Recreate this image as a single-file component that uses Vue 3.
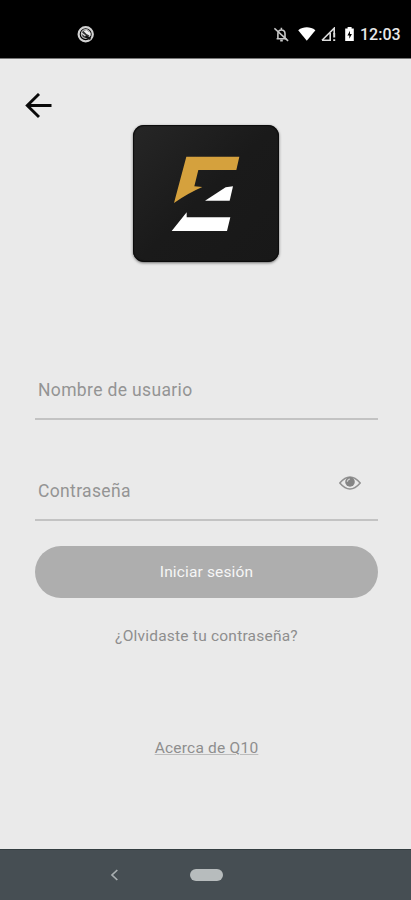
<script setup>
import { ref } from 'vue'

const username = ref('')
const password = ref('')
const passwordVisible = ref(false)
</script>

<template>
  <div class="screen">
    <header class="status">
      <svg class="app-mark" width="18" height="18" viewBox="0 0 18 18">
        <circle cx="8.7" cy="9.2" r="7.1" fill="none" stroke="#d2d2d2" stroke-width="2.2" />
        <circle cx="8.7" cy="9" r="4.3" fill="#333" stroke="#bbb" stroke-width="1.3" />
        <path d="M6.5 6l3-1 4 3v3l-4-2z" fill="#eee" />
        <path d="M4.5 8l4 3" stroke="#ddd" stroke-width="1.2" />
        <path d="M8.5 11.5l5 2.5" stroke="#111" stroke-width="2" />
      </svg>
      <div class="indicators">
        <svg class="bell" width="16" height="16" viewBox="0 0 16 16" fill="none" stroke="#c8c8c8" stroke-width="1.6">
          <path d="M2.6 11.7h10M3.9 11.5V6.7C3.9 4.3 5.2 3 7.4 3S11 4.4 11 6.7v4.8M7.4.8v2M6.2 13.6h2.6" />
          <path d="M.4 1.4l13.7 12.5" />
        </svg>
        <svg class="wifi" width="18" height="14" viewBox="0 0 18 14">
          <path d="M.2 3.2C5.5-.6 12.1-.6 17.4 3.2L8.8 13.8z" fill="#fff" />
        </svg>
        <svg class="signal" width="16" height="15" viewBox="0 0 16 15">
          <path d="M1 13.2L13.2 1.2v5.5M1 13.2h8.2V6" fill="none" stroke="#ddd" stroke-width="1.6" />
          <path d="M13.2 6v4.6M13.2 12.2v1.9" stroke="#ddd" stroke-width="2" />
        </svg>
        <svg class="battery" width="10" height="15" viewBox="0 0 10 15">
          <path d="M2.6 0h4v1.5h2.2V14H.2V1.5h2.4z" fill="#fff" />
          <path d="M5 3.7L2.4 8.4h1.9v3.3L6.9 7H5z" fill="#000" />
        </svg>
        <span class="time">12:03</span>
      </div>
    </header>

    <main class="content">
      <button class="back" aria-label="Atrás">
        <svg width="28" height="26" viewBox="0 0 28 26" fill="none" stroke="#0a0a0a" stroke-width="2.9">
          <path d="M27.5 12.5H3M15 1L3.3 12.5 15 24" />
        </svg>
      </button>

      <div class="logo">
        <svg width="146" height="137" viewBox="40 31 438 411">
          <path d="M200 126H359L350 166H236L224 215L248 217Q204 236 163 265Z" fill="#d5a13d" />
          <path d="M256 258L318 218L340 215L330 258Z" fill="#fff" />
          <path d="M156 349L201 293V308H332L322 349Z" fill="#fff" />
        </svg>
      </div>

      <form class="form" @submit.prevent>
        <label class="field">
          <input v-model="username" class="user-input" type="text" placeholder="Nombre de usuario" />
        </label>
        <div class="field second">
          <input v-model="password" class="pass-input" :type="passwordVisible ? 'text' : 'password'" placeholder="Contraseña" />
          <button class="eye" type="button" aria-label="Mostrar" @click="passwordVisible = !passwordVisible">
            <svg width="22" height="14" viewBox="0 0 22 14">
              <path d="M.8 7Q11-5 21.2 7Q11 19 .8 7Z" fill="none" stroke="#919191" stroke-width="1.5" />
              <circle cx="11" cy="5.9" r="4.8" fill="#858585" />
              <path d="M8.3 5.8Q8.5 3.3 11 3" fill="none" stroke="#d0d0d0" stroke-width="1.2" />
            </svg>
          </button>
        </div>
        <button class="submit" type="submit"><span>Iniciar sesión</span></button>
      </form>
      <a class="forgot">¿Olvidaste tu contraseña?</a>
      <a class="about">Acerca de Q10</a>
    </main>

    <nav class="navbar">
      <svg class="nav-back" width="9" height="13" viewBox="0 0 9 13">
        <path d="M7.3 1L2 6l5.3 5" fill="none" stroke="#a9afb1" stroke-width="1.7" />
      </svg>
      <span class="home"></span>
    </nav>
  </div>
</template>

<style>
body {
  margin: 0;
  overflow: hidden;
}
</style>

<style scoped>
.screen {
  display: flex;
  flex-direction: column;
  width: 411px;
  height: 900px;
  background: #eaeaea;
  font-family: Roboto, sans-serif;
}
.screen * {
  box-sizing: border-box;
}
svg {
  display: block;
  flex: none;
}
button {
  padding: 0;
  border: 0;
  background: none;
  font-family: inherit;
}
.status {
  display: flex;
  justify-content: space-between;
  flex: none;
  height: 59px;
  padding: 25px 10px 0 77px;
  background: #000;
  border-bottom: 1px solid #777;
}
.indicators {
  display: flex;
  align-items: flex-start;
  padding-top: 2px;
}
.wifi {
  margin-left: 8px;
}
.signal {
  margin-left: 5px;
}
.battery {
  margin-left: 8px;
}
.time {
  width: 41px;
  margin-left: 5px;
  color: #e8e8e8;
  font-size: 16px;
  font-weight: 500;
  line-height: 16px;
  white-space: nowrap;
}
.content {
  display: flex;
  flex-direction: column;
  align-items: center;
  flex: 1;
  padding: 34px 33px 0 35px;
}
.back {
  align-self: flex-start;
  height: 26px;
  margin-left: -11px;
}
.logo {
  width: 146px;
  height: 137px;
  margin: 6px 1px 0 0;
  border-radius: 11px;
  background: linear-gradient(135deg, #262626, #1a1a1a 50%, #181818);
  box-shadow: 0 1px 3px rgba(0, 0, 0, 0.55), inset 0 0 1px 1px #0c0c0c;
}
.form {
  width: 100%;
  margin-top: 108px;
}
.field {
  display: flex;
  height: 50px;
  border-bottom: 2px solid #c3c3c3;
}
.second {
  margin-top: 51px;
}
input {
  flex: 1;
  min-width: 0;
  height: 39px;
  padding: 0 3px;
  border: 0;
  outline: 0;
  background: transparent;
  color: #555;
  font-family: inherit;
  font-size: 17.5px;
  letter-spacing: 0.35px;
}
input::placeholder {
  color: #949494;
  opacity: 1;
}
.eye {
  height: 14px;
  margin: 5px 17px 0 0;
}
.submit {
  display: block;
  width: 100%;
  height: 52px;
  margin-top: 25px;
  border-radius: 26px;
  background: #aeaeae;
  color: #f6f6f6;
  font-size: 15.5px;
  letter-spacing: 0.15px;
}
.forgot,
.about {
  color: #8e8e8e;
  font-size: 15.5px;
  letter-spacing: 0.22px;
  line-height: 20px;
  white-space: nowrap;
}
.forgot {
  margin-top: 28px;
}
.about {
  margin-top: 92px;
  text-decoration: underline;
  text-decoration-color: #bcbcbc;
}
.navbar {
  display: flex;
  align-items: flex-start;
  flex: none;
  height: 51px;
  padding: 19px 0 0 110px;
  border-top: 1px solid #343e41;
  background: #464e53;
}
.home {
  width: 33px;
  height: 12px;
  margin-left: 71px;
  border-radius: 6px;
  background: #b7bcbd;
}
</style>
